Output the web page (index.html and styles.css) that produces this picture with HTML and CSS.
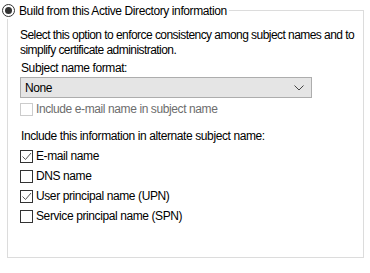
FILE: index.html
```html
<!DOCTYPE html>
<html lang="en">
<head>
    <meta charset="UTF-8">
    <title>Subject Name</title>
    <link rel="stylesheet" href="styles.css">
</head>
<body>

    <!-- Build from AD group -->
    <fieldset class="group">
        <legend class="group-title">
            <span class="radio"><span class="radio-dot"></span></span>
            <span>Build from this Active Directory information</span>
        </legend>

        <p class="hint">Select this option to enforce consistency among subject names and to simplify certificate administration.</p>

        <div class="label">Subject name format:</div>
        <div class="select">
            <span>None</span>
            <svg class="chevron" width="10" height="6" viewBox="0 0 10 6">
                <path d="M0.5 0.5 L5 5 L9.5 0.5" fill="none" stroke="#444" stroke-width="1"/>
            </svg>
        </div>

        <div class="check disabled">
            <span class="box"></span>
            <span>Include e-mail name in subject name</span>
        </div>

        <div class="label alt">Include this information in alternate subject name:</div>

        <div class="check-list">
            <div class="check">
                <span class="box"><svg width="11" height="11" viewBox="0 0 11 11"><path d="M1.5 5.5 L4.5 8.5 L10 2" fill="none" stroke="#555" stroke-width="1"/></svg></span>
                <span>E-mail name</span>
            </div>
            <div class="check">
                <span class="box"></span>
                <span>DNS name</span>
            </div>
            <div class="check">
                <span class="box"><svg width="11" height="11" viewBox="0 0 11 11"><path d="M1.5 5.5 L4.5 8.5 L10 2" fill="none" stroke="#555" stroke-width="1"/></svg></span>
                <span>User principal name (UPN)</span>
            </div>
            <div class="check">
                <span class="box"></span>
                <span>Service principal name (SPN)</span>
            </div>
        </div>
    </fieldset>

</body>
</html>
```
FILE: styles.css
```css
body {
    margin: 0;
    padding: 2px 0 0 7px;
    background-color: #fff;
    font-family: "Liberation Sans", Arial, sans-serif;
    font-size: 12px;
    letter-spacing: -0.4px;
    color: #000;
}

.group {
    width: 357px;
    height: 256px;
    box-sizing: border-box;
    margin: 0;
    padding: 0 12px 0 12px;
    border: 1px solid #dcdcdc;
}

.group-title {
    display: flex;
    align-items: center;
    gap: 4px;
    height: 17px;
    margin-left: -18px;
    padding: 0 2px 0 0;
}

.radio {
    width: 13px;
    height: 13px;
    box-sizing: border-box;
    border: 1px solid #333;
    border-radius: 50%;
    display: flex;
    align-items: center;
    justify-content: center;
}

.radio-dot {
    width: 7px;
    height: 7px;
    border-radius: 50%;
    background-color: #333;
}

.hint {
    margin: 9px -10px 0 0;
    line-height: 15px;
    letter-spacing: -0.55px;
}

.label {
    margin-top: 3px;
    line-height: 15px;
    padding-left: 1px;
}

.select {
    display: flex;
    align-items: center;
    justify-content: space-between;
    width: 292px;
    height: 21px;
    box-sizing: border-box;
    margin-top: 1px;
    padding: 0 7px 0 4px;
    background-color: #e5e5e5;
    border: 1px solid #adadad;
}

.check {
    display: flex;
    align-items: center;
    gap: 3px;
    height: 20px;
}

.check .box {
    width: 13px;
    height: 13px;
    box-sizing: border-box;
    border: 1px solid #333;
    background-color: #fff;
    display: flex;
    align-items: center;
    justify-content: center;
}

.check.disabled {
    margin-top: 1px;
    color: #6d6d6d;
}

.check.disabled .box {
    border-color: #cccccc;
}

.label.alt {
    margin-top: 10px;
}

.check-list {
    margin-top: 2px;
}
```
